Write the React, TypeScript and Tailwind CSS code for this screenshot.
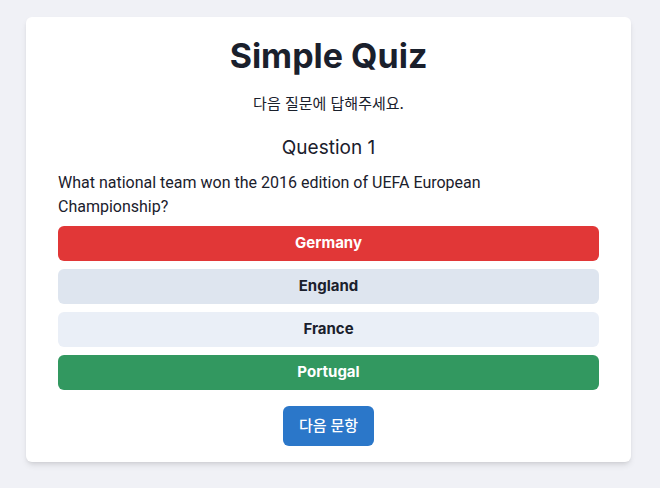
const answers = [
  { label: "Germany", style: "bg-[#e13737] text-white" },
  { label: "England", style: "bg-[#dee5ef] text-[#1a202c]" },
  { label: "France", style: "bg-[#eaeff7] text-[#1a202c]" },
  { label: "Portugal", style: "bg-[#329860] text-white" },
];

export default function App() {
  return (
    <div className="min-h-screen bg-[#f0f1f6] pt-[17px] pr-[29px] pb-[26px] pl-[26px] font-[Inter,'Noto_Sans_CJK_KR',sans-serif] text-[#1a202c]">
      <main className="flex flex-col items-center rounded-md bg-white px-8 py-4 shadow-md">
        <h1 className="text-[34px] leading-[46px] font-bold">Simple Quiz</h1>
        <p className="mt-3.5 text-[15px] leading-[22px]">다음 질문에 답해주세요.</p>
        <section className="mt-4 flex w-full flex-col">
          <h2 className="text-center text-[19px] leading-[33px]">Question 1</h2>
          <p className="mt-[7px] pr-4 font-[Roboto,sans-serif] text-base leading-6">
            What national team won the 2016 edition of UEFA European Championship?
          </p>
          <div className="mt-[7px] flex flex-col gap-2">
            {answers.map((answer) => (
              <button
                key={answer.label}
                type="button"
                className={`h-[35px] w-full rounded-md text-[15px] font-bold ${answer.style}`}
              >
                {answer.label}
              </button>
            ))}
          </div>
        </section>
        <button type="button" className="mt-4 h-10 rounded-md bg-[#2b77c9] px-4 text-[15px] font-medium text-white">
          다음 문항
        </button>
      </main>
    </div>
  );
}
